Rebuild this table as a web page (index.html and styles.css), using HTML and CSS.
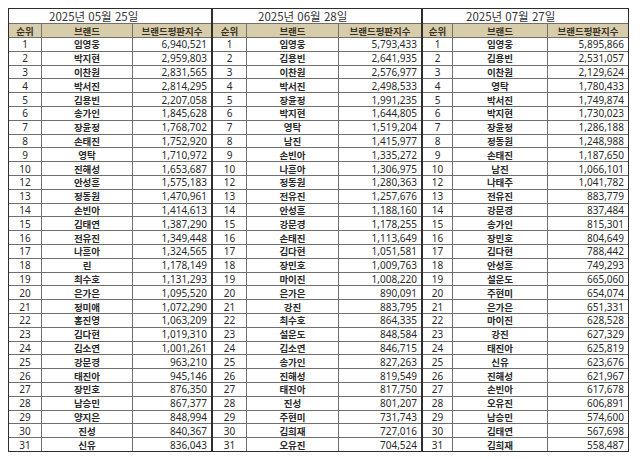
FILE: index.html
```html
<!DOCTYPE html>
<html lang="ko">
<head>
<meta charset="utf-8">
<link rel="stylesheet" href="styles.css">
</head>
<body>
<div class="page">
  <div class="sheet s1">
    <div class="title">2025년 05월 25일</div>
    <div class="h">순위</div><div class="h">브랜드</div><div class="h">브랜드평판지수</div>
    <div class="r">1</div><div class="b">임영웅</div><div class="n">6,940,521</div>
    <div class="r">2</div><div class="b">박지현</div><div class="n">2,959,803</div>
    <div class="r">3</div><div class="b">이찬원</div><div class="n">2,831,565</div>
    <div class="r">4</div><div class="b">박서진</div><div class="n">2,814,295</div>
    <div class="r">5</div><div class="b">김용빈</div><div class="n">2,207,058</div>
    <div class="r">6</div><div class="b">송가인</div><div class="n">1,845,628</div>
    <div class="r">7</div><div class="b">장윤정</div><div class="n">1,768,702</div>
    <div class="r">8</div><div class="b">손태진</div><div class="n">1,752,920</div>
    <div class="r">9</div><div class="b">영탁</div><div class="n">1,710,972</div>
    <div class="r">10</div><div class="b">진해성</div><div class="n">1,653,687</div>
    <div class="r">12</div><div class="b">안성훈</div><div class="n">1,575,183</div>
    <div class="r">13</div><div class="b">정동원</div><div class="n">1,470,961</div>
    <div class="r">14</div><div class="b">손빈아</div><div class="n">1,414,613</div>
    <div class="r">15</div><div class="b">김태연</div><div class="n">1,387,290</div>
    <div class="r">16</div><div class="b">전유진</div><div class="n">1,349,448</div>
    <div class="r">17</div><div class="b">나훈아</div><div class="n">1,324,565</div>
    <div class="r">18</div><div class="b">린</div><div class="n">1,178,149</div>
    <div class="r">19</div><div class="b">최수호</div><div class="n">1,131,293</div>
    <div class="r">20</div><div class="b">은가은</div><div class="n">1,095,520</div>
    <div class="r">21</div><div class="b">정미애</div><div class="n">1,072,290</div>
    <div class="r">22</div><div class="b">홍진영</div><div class="n">1,063,209</div>
    <div class="r">23</div><div class="b">김다현</div><div class="n">1,019,310</div>
    <div class="r">24</div><div class="b">김소연</div><div class="n">1,001,261</div>
    <div class="r">25</div><div class="b">강문경</div><div class="n">963,210</div>
    <div class="r">26</div><div class="b">태진아</div><div class="n">945,146</div>
    <div class="r">27</div><div class="b">장민호</div><div class="n">876,350</div>
    <div class="r">28</div><div class="b">남승민</div><div class="n">867,377</div>
    <div class="r">29</div><div class="b">양지은</div><div class="n">848,994</div>
    <div class="r">30</div><div class="b">진성</div><div class="n">840,367</div>
    <div class="r">31</div><div class="b">신유</div><div class="n">836,043</div>
  </div>
  <div class="sheet s2">
    <div class="title">2025년 06월 28일</div>
    <div class="h">순위</div><div class="h">브랜드</div><div class="h">브랜드평판지수</div>
    <div class="r">1</div><div class="b">임영웅</div><div class="n">5,793,433</div>
    <div class="r">2</div><div class="b">김용빈</div><div class="n">2,641,935</div>
    <div class="r">3</div><div class="b">이찬원</div><div class="n">2,576,977</div>
    <div class="r">4</div><div class="b">박서진</div><div class="n">2,498,533</div>
    <div class="r">5</div><div class="b">장윤정</div><div class="n">1,991,235</div>
    <div class="r">6</div><div class="b">박지현</div><div class="n">1,644,805</div>
    <div class="r">7</div><div class="b">영탁</div><div class="n">1,519,204</div>
    <div class="r">8</div><div class="b">남진</div><div class="n">1,415,977</div>
    <div class="r">9</div><div class="b">손빈아</div><div class="n">1,335,272</div>
    <div class="r">10</div><div class="b">나훈아</div><div class="n">1,306,975</div>
    <div class="r">12</div><div class="b">정동원</div><div class="n">1,280,363</div>
    <div class="r">13</div><div class="b">전유진</div><div class="n">1,257,676</div>
    <div class="r">14</div><div class="b">안성훈</div><div class="n">1,188,160</div>
    <div class="r">15</div><div class="b">강문경</div><div class="n">1,178,255</div>
    <div class="r">16</div><div class="b">손태진</div><div class="n">1,113,649</div>
    <div class="r">17</div><div class="b">김다현</div><div class="n">1,051,581</div>
    <div class="r">18</div><div class="b">장민호</div><div class="n">1,009,763</div>
    <div class="r">19</div><div class="b">마이진</div><div class="n">1,008,220</div>
    <div class="r">20</div><div class="b">은가은</div><div class="n">890,091</div>
    <div class="r">21</div><div class="b">강진</div><div class="n">883,795</div>
    <div class="r">22</div><div class="b">최수호</div><div class="n">864,335</div>
    <div class="r">23</div><div class="b">설운도</div><div class="n">848,584</div>
    <div class="r">24</div><div class="b">김소연</div><div class="n">846,715</div>
    <div class="r">25</div><div class="b">송가인</div><div class="n">827,263</div>
    <div class="r">26</div><div class="b">진해성</div><div class="n">819,549</div>
    <div class="r">27</div><div class="b">태진아</div><div class="n">817,750</div>
    <div class="r">28</div><div class="b">진성</div><div class="n">801,207</div>
    <div class="r">29</div><div class="b">주현미</div><div class="n">731,743</div>
    <div class="r">30</div><div class="b">김희재</div><div class="n">727,016</div>
    <div class="r">31</div><div class="b">오유진</div><div class="n">704,524</div>
  </div>
  <div class="sheet s3">
    <div class="title">2025년 07월 27일</div>
    <div class="h">순위</div><div class="h">브랜드</div><div class="h">브랜드평판지수</div>
    <div class="r">1</div><div class="b">임영웅</div><div class="n">5,895,866</div>
    <div class="r">2</div><div class="b">김용빈</div><div class="n">2,531,057</div>
    <div class="r">3</div><div class="b">이찬원</div><div class="n">2,129,624</div>
    <div class="r">4</div><div class="b">영탁</div><div class="n">1,780,433</div>
    <div class="r">5</div><div class="b">박서진</div><div class="n">1,749,874</div>
    <div class="r">6</div><div class="b">박지현</div><div class="n">1,730,023</div>
    <div class="r">7</div><div class="b">장윤정</div><div class="n">1,286,188</div>
    <div class="r">8</div><div class="b">정동원</div><div class="n">1,248,988</div>
    <div class="r">9</div><div class="b">손태진</div><div class="n">1,187,650</div>
    <div class="r">10</div><div class="b">남진</div><div class="n">1,066,101</div>
    <div class="r">12</div><div class="b">나태주</div><div class="n">1,041,782</div>
    <div class="r">13</div><div class="b">전유진</div><div class="n">883,779</div>
    <div class="r">14</div><div class="b">강문경</div><div class="n">837,484</div>
    <div class="r">15</div><div class="b">송가인</div><div class="n">815,301</div>
    <div class="r">16</div><div class="b">장민호</div><div class="n">804,649</div>
    <div class="r">17</div><div class="b">김다현</div><div class="n">788,442</div>
    <div class="r">18</div><div class="b">안성훈</div><div class="n">749,293</div>
    <div class="r">19</div><div class="b">설운도</div><div class="n">665,060</div>
    <div class="r">20</div><div class="b">주현미</div><div class="n">654,074</div>
    <div class="r">21</div><div class="b">은가은</div><div class="n">651,331</div>
    <div class="r">22</div><div class="b">마이진</div><div class="n">628,528</div>
    <div class="r">23</div><div class="b">강진</div><div class="n">627,329</div>
    <div class="r">24</div><div class="b">태진아</div><div class="n">625,819</div>
    <div class="r">25</div><div class="b">신유</div><div class="n">623,676</div>
    <div class="r">26</div><div class="b">진해성</div><div class="n">621,967</div>
    <div class="r">27</div><div class="b">손빈아</div><div class="n">617,678</div>
    <div class="r">28</div><div class="b">오유진</div><div class="n">606,891</div>
    <div class="r">29</div><div class="b">남승민</div><div class="n">574,600</div>
    <div class="r">30</div><div class="b">김태연</div><div class="n">567,698</div>
    <div class="r">31</div><div class="b">김희재</div><div class="n">558,487</div>
  </div>
</div>
</body>
</html>
```

FILE: styles.css
```css
html, body {
  margin: 0;
  padding: 0;
  background: #ffffff;
}

body {
  font-family: "Noto Sans", "Noto Sans CJK KR", sans-serif;
  color: #2a2a2a;
}

.page {
  display: flex;
  padding: 8px 0 0 8px;
}

.sheet {
  display: grid;
  grid-template-rows: 14px 13px repeat(30, 12.8px);
  gap: 1px;
  background: #6f6f6f;
  border: 1px solid #2e2e2e;
}

.s1 { grid-template-columns: 32px 90px 78px; }
.s2 { grid-template-columns: 33px 91px 82px; }
.s3 { grid-template-columns: 29px 94px 80px; }

.sheet > div {
  background: #ffffff;
  display: flex;
  align-items: center;
  overflow: hidden;
  white-space: nowrap;
}

.title {
  grid-column: 1 / span 3;
  font-family: "Noto Sans CJK KR", sans-serif;
  font-size: 11.5px;
  color: #333;
  padding-left: 40px;
}

.s2 .title { padding-left: 45px; }
.s3 .title { padding-left: 43px; }

.sheet > .h {
  justify-content: center;
  background: #d8cdaa;
  font-family: "Noto Sans CJK KR", sans-serif;
  font-weight: 700;
  font-size: 9.5px;
  color: #3a3428;
}

.r {
  justify-content: center;
  font-size: 10px;
}

.b {
  justify-content: center;
  font-family: "Noto Sans CJK KR", sans-serif;
  font-weight: 700;
  font-size: 9.5px;
}

.n {
  justify-content: flex-end;
  padding-right: 4px;
  font-size: 10px;
}
```
